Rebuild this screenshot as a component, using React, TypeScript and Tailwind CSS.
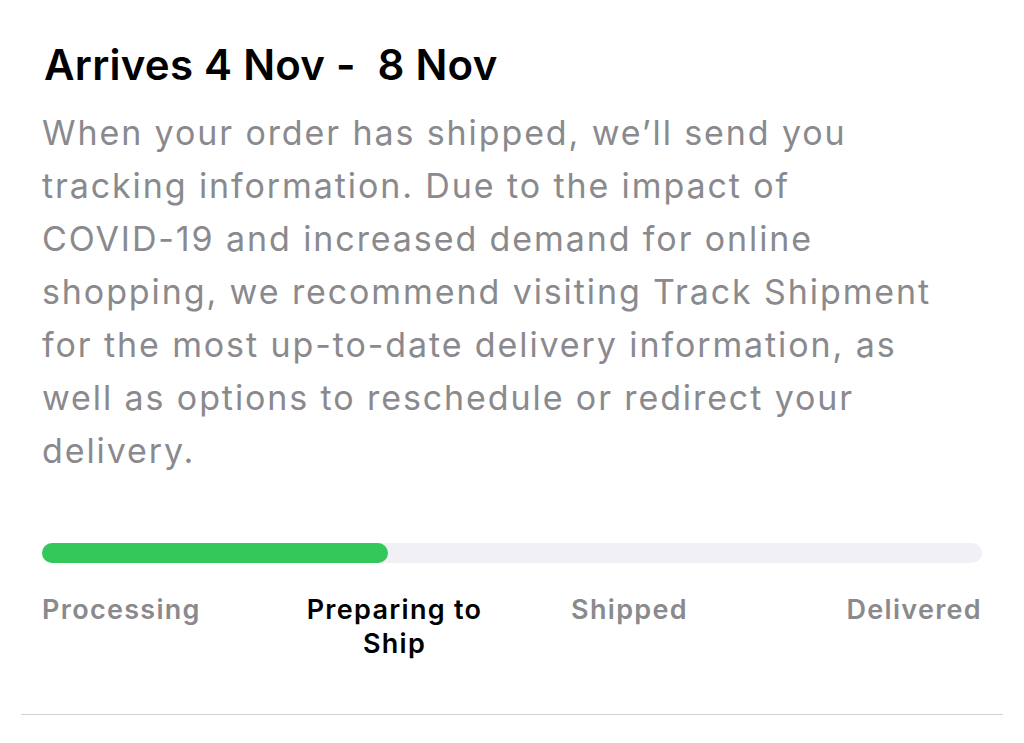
import React from "react";

const steps = [
  { label: "Processing", align: "text-left", active: false },
  { label: "Preparing to Ship", align: "text-center", active: true },
  { label: "Shipped", align: "text-center", active: false },
  { label: "Delivered", align: "text-right", active: false },
];

const lines = [
  "When your order has shipped, we’ll send you",
  "tracking information. Due to the impact of",
  "COVID-19 and increased demand for online",
  "shopping, we recommend visiting Track Shipment",
  "for the most up-to-date delivery information, as",
  "well as options to reschedule or redirect your",
  "delivery.",
];

export default function App() {
  return (
    <div
      className="min-h-[743px] w-[1024px] bg-white"
      style={{ fontFamily: "Inter, 'Noto Sans', sans-serif" }}
    >
      <div className="px-[42px] pt-[39px]">
        <h1 className="pl-[2px] text-[42px] leading-[52px] font-semibold text-black tracking-[0.25px]">
          Arrives 4 Nov -&nbsp; 8 Nov
        </h1>
        <p className="mt-[15px] text-[34px] leading-[53px] text-[#8a8a8e] tracking-[1.9px]">
          {lines.map((l) => (
            <span key={l} className="block whitespace-nowrap">
              {l}
            </span>
          ))}
        </p>
        <div className="mt-[66px] h-[20px] w-full rounded-full bg-[#f0f0f5]">
          <div className="h-full w-[36.8%] rounded-full bg-[#34c759]" />
        </div>
        <div className="mt-[30px] grid grid-cols-4">
          {steps.map((s) => (
            <div
              key={s.label}
              className={`${s.align} text-[27px] leading-[34px] font-semibold tracking-[1.3px] ${
                s.active ? "text-black" : "text-[#8a8a8e]"
              }`}
            >
              {s.label === "Preparing to Ship" ? (
                <>
                  Preparing to
                  <br />
                  Ship
                </>
              ) : (
                s.label
              )}
            </div>
          ))}
        </div>
      </div>
      <div className="mx-[21px] mt-[53px] h-px bg-[#d1d1d6]" />
    </div>
  );
}
